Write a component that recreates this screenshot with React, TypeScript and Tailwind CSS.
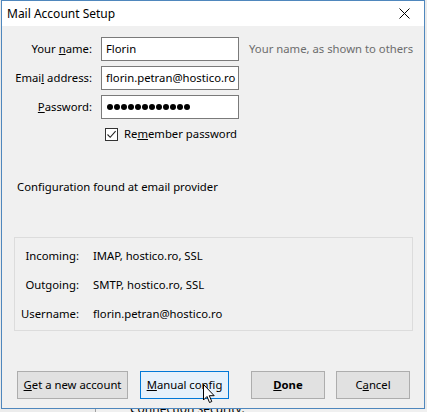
import React from "react";

const font = { fontFamily: '"Noto Sans", "Segoe UI", Arial, sans-serif' };

function Dots() {
  return (
    <div className="flex gap-[1px] items-center">
      {Array.from({ length: 12 }).map((_, i) => (
        <div key={i} className="w-[6px] h-[6px] rounded-full bg-black" />
      ))}
    </div>
  );
}

export default function App() {
  return (
    <div className="w-[427px] h-[412px] bg-[#eaeaea] overflow-hidden relative text-[11.3px] text-[#000]" style={font}>
      <div className="ml-[1px] w-[424px] h-[409px] border border-[#4f87bd] bg-[#f0f0f0] flex flex-col">
        {/* title bar */}
        <div className="h-[25px] bg-white flex items-center justify-between pl-[5px] pr-[14px] shrink-0">
          <span className="text-[12px] leading-none">Mail Account Setup</span>
          <svg width="11" height="11" viewBox="0 0 11 11">
            <path d="M0.5 0.5 L10.5 10.5 M10.5 0.5 L0.5 10.5" stroke="#000" strokeWidth="1" />
          </svg>
        </div>
        {/* body */}
        <div className="flex flex-col pt-[11px] flex-1">
          <div className="flex flex-col gap-[5px]">
            <div className="flex items-center h-[24px]">
              <div className="w-[91px] text-right pr-[1px]">Your <u>n</u>ame:</div>
              <div className="ml-[8px] w-[138px] h-[24px] bg-white border border-[#7a7a7a] flex items-center pl-[4px]">Florin</div>
              <div className="ml-[10px] text-[#6d6d6d]">Your name, as shown to others</div>
            </div>
            <div className="flex items-center h-[24px]">
              <div className="w-[91px] text-right pr-[1px]">Emai<u>l</u> address:</div>
              <div className="ml-[8px] w-[138px] h-[24px] bg-white border border-[#7a7a7a] flex items-center pl-[4px] overflow-hidden whitespace-nowrap">florin.petran@hostico.ro</div>
            </div>
            <div className="flex items-center h-[24px]">
              <div className="w-[91px] text-right pr-[1px]"><u>P</u>assword:</div>
              <div className="ml-[8px] w-[138px] h-[24px] bg-white border border-[#7a7a7a] flex items-center pl-[5px]">
                <Dots />
              </div>
            </div>
          </div>
          <div className="flex items-center mt-[8px] ml-[103px] h-[15px]">
            <div className="w-[13px] h-[13px] border border-[#333] bg-white flex items-center justify-center">
              <svg width="11" height="11" viewBox="0 0 11 11">
                <path d="M1.5 5.5 L4.2 8.3 L9.6 2.2" stroke="#222" strokeWidth="1.1" fill="none" />
              </svg>
            </div>
            <span className="ml-[6px]">Re<u>m</u>ember password</span>
          </div>
          <div className="mt-[37px] ml-[15px] h-[16px] leading-[16px]">Configuration found at email provider</div>
          <div className="mt-[42px] ml-[12px] w-[399px] h-[94px] border border-[#dcdcdc] flex flex-col pt-[9px] gap-[11px]">
            {[
              ["Incoming:", "IMAP, hostico.ro, SSL"],
              ["Outgoing:", "SMTP, hostico.ro, SSL"],
              ["Username:", "florin.petran@hostico.ro"],
            ].map(([l, v]) => (
              <div key={l} className="flex items-center h-[18px]">
                <div className="w-[64px] text-right">{l}</div>
                <div className="ml-[14px]">{v}</div>
              </div>
            ))}
          </div>
          <div className="mt-[40px] flex items-center ml-[15px]">
            <div className="w-[111px] h-[28px] bg-[#e1e1e1] border border-[#adadad] flex items-center justify-center"><span><u>G</u>et a new account</span></div>
            <div className="ml-[12px] w-[89px] h-[28px] bg-[#e5f1fb] border border-[#0078d7] flex items-center justify-center"><span><u>M</u>anual config</span></div>
            <div className="ml-[22px] w-[74px] h-[28px] bg-[#e1e1e1] border border-[#adadad] flex items-center justify-center font-bold"><span><u>D</u>one</span></div>
            <div className="ml-[11px] w-[74px] h-[28px] bg-[#e1e1e1] border border-[#adadad] flex items-center justify-center"><span>C<u>a</u>ncel</span></div>
          </div>
        </div>
      </div>
      {/* strip below window */}
      <div className="h-[3px] relative overflow-hidden flex">
        <div className="w-[95px] h-full bg-[#ececec]" />
        <div className="w-[1px] h-full bg-[#a0a0a0]" />
        <div className="flex-1 h-full bg-[#f0f0f0] relative">
          <span className="absolute left-[34px] top-[-6px] text-[12px] leading-[12px]">Connection security:</span>
        </div>
      </div>
      {/* mouse cursor */}
      <svg className="absolute left-[203px] top-[384px]" width="13" height="20" viewBox="0 0 13 20">
        <path d="M0.5 0.5 L0.5 16 L4 12.5 L6.5 18.5 L8.8 17.5 L6.3 11.7 L11.2 11.7 Z" fill="#fff" stroke="#000" strokeWidth="1" />
      </svg>
    </div>
  );
}
